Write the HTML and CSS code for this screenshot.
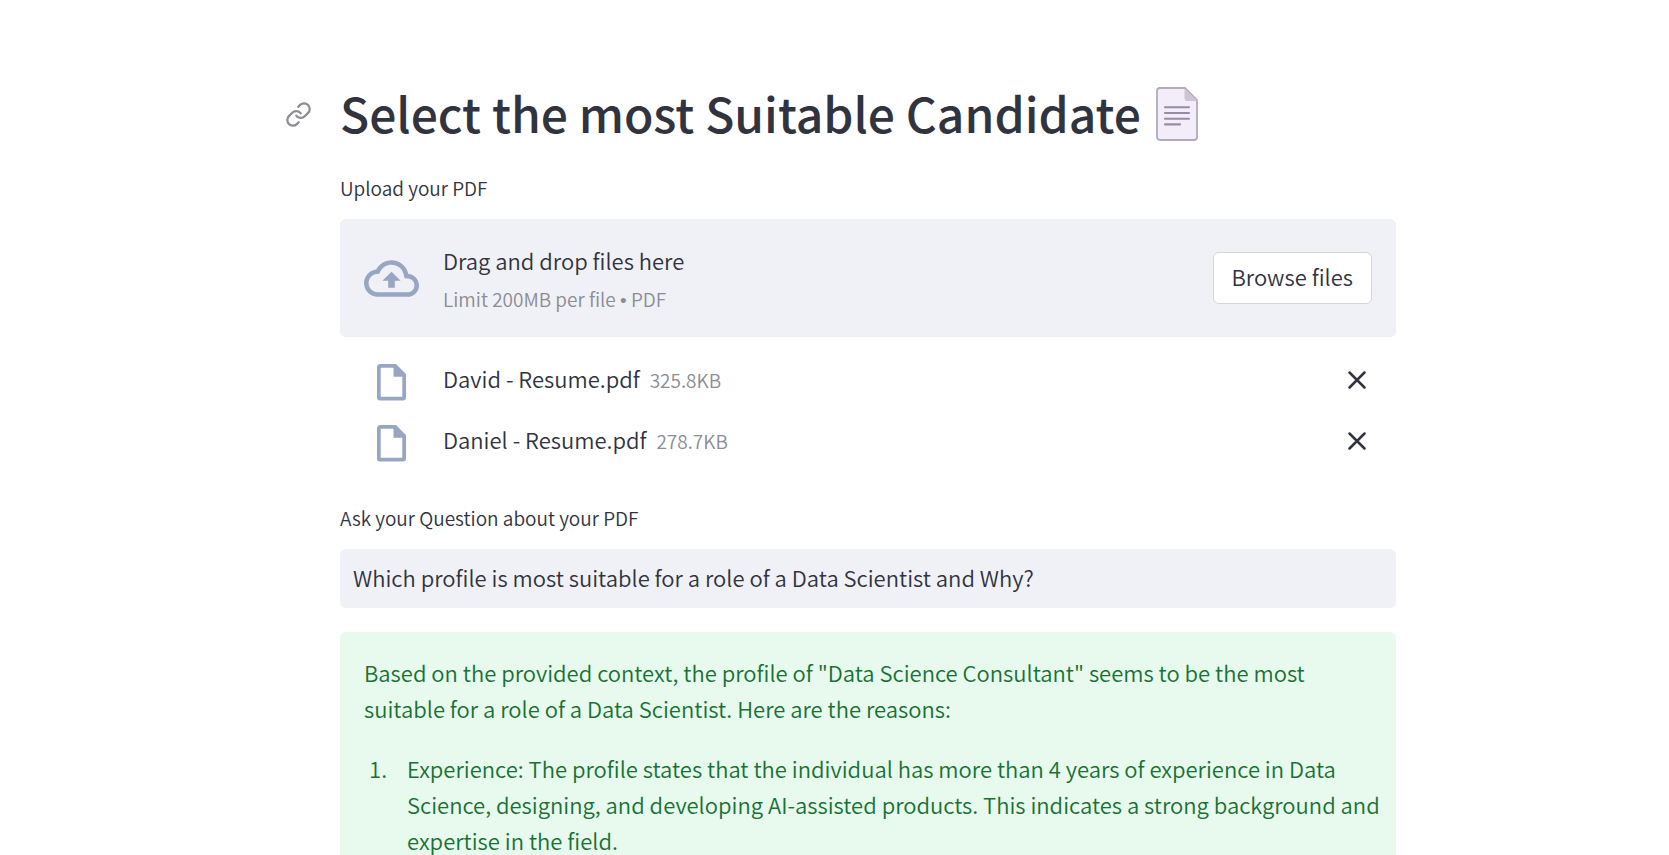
FILE: index.html
```html
<!DOCTYPE html>
<html lang="en">
<head>
<meta charset="utf-8">
<meta name="viewport" content="width=device-width, initial-scale=1">
<title>Select the most Suitable Candidate</title>
<link rel="stylesheet" href="styles.css">
</head>
<body>
<svg class="sprite" aria-hidden="true">
  <symbol id="file" viewBox="0 0 29 37">
    <path fill-rule="evenodd" d="M3.500 0H19L29 10V33.500A3 3 0 0 1 26 36.500H3A3 3 0 0 1 0 33.500V3.500A3.500 3.500 0 0 1 3.500 0ZM3.700 3.700V32.800H25.300V12.800H16.500V3.700Z"/>
  </symbol>
  <symbol id="cross" viewBox="0 0 18 18">
    <path d="M1.500 1.500L16.500 16.500M16.500 1.500L1.500 16.500"/>
  </symbol>
</svg>
<main class="page">
  <header class="heading">
    <a class="anchor" href="#title" aria-label="Link to heading">
      <svg viewBox="0 0 24 24"><path d="M10 13a5 5 0 0 0 7.540.540l3-3a5 5 0 0 0-7.070-7.070l-1.720 1.710"/><path d="M14 11a5 5 0 0 0-7.540-.540l-3 3a5 5 0 0 0 7.070 7.070l1.710-1.710"/></svg>
    </a>
    <h1 class="title" id="title">Select the most Suitable Candidate</h1>
    <svg class="page-icon" viewBox="0 0 42 54" aria-hidden="true">
      <path d="M4 1H29L41 13V50A3 3 0 0 1 38 53H4A3 3 0 0 1 1 50V4A3 3 0 0 1 4 1Z" fill="#f3edf9" stroke="#b4a9bc" stroke-width="1.800"/>
      <path d="M28.500 2V11A3 3 0 0 0 31.500 14H40.500V13L29 1.500Z" fill="#cdc4d6"/>
      <path d="M9 20.200H33M9 26H33M9 31.800H33M9 37.400H24" stroke="#998ba6" stroke-width="2.100" stroke-linecap="round"/>
    </svg>
  </header>

  <section class="field">
    <label class="label" for="browse">Upload your PDF</label>
    <div class="dropzone">
      <svg class="cloud" viewBox="0 0 24 24" aria-hidden="true"><path d="M19.350 10.040C18.670 6.590 15.640 4 12 4 9.110 4 6.600 5.640 5.350 8.040 2.340 8.360 0 10.910 0 14c0 3.310 2.690 6 6 6h13c2.760 0 5-2.240 5-5 0-2.640-2.050-4.780-4.650-4.960zM19 18H6c-2.210 0-4-1.790-4-4 0-2.050 1.530-3.760 3.560-3.970l1.070-.110.500-.950C8.080 7.140 9.940 6 12 6c2.620 0 4.880 1.860 5.390 4.430l.300 1.500 1.530.110c1.560.100 2.780 1.410 2.780 2.960 0 1.650-1.350 3-3 3zM8 13h2.550v3h2.900v-3H16l-4-4z"/></svg>
      <div class="hint">
        <span class="hint-main">Drag and drop files here</span>
        <span class="hint-sub">Limit 200MB per file <span class="dot">•</span> PDF</span>
      </div>
      <button class="browse" id="browse" type="button">Browse files</button>
    </div>
    <ul class="files">
      <li class="file">
        <svg class="file-icon" aria-hidden="true"><use href="#file"/></svg>
        <span class="file-name">David - Resume.pdf</span>
        <span class="file-size">325.8KB</span>
        <button class="remove" type="button" aria-label="Remove David - Resume.pdf"><svg><use href="#cross"/></svg></button>
      </li>
      <li class="file">
        <svg class="file-icon" aria-hidden="true"><use href="#file"/></svg>
        <span class="file-name">Daniel - Resume.pdf</span>
        <span class="file-size">278.7KB</span>
        <button class="remove" type="button" aria-label="Remove Daniel - Resume.pdf"><svg><use href="#cross"/></svg></button>
      </li>
    </ul>
  </section>

  <section class="field">
    <label class="label" for="question">Ask your Question about your PDF</label>
    <input class="question" id="question" type="text" value="Which profile is most suitable for a role of a Data Scientist and Why?">
  </section>

  <section class="answer">
    <p>Based on the provided context, the profile of "Data Science Consultant" seems to be the most suitable for a role of a Data Scientist. Here are the reasons:</p>
    <ol>
      <li>Experience: The profile states that the individual has more than 4 years of experience in Data Science, designing, and developing AI-assisted products. This indicates a strong background and expertise in the field.</li>
    </ol>
  </section>
</main>
</body>
</html>
```

FILE: styles.css
```css
* { box-sizing: border-box; }
html { overflow: hidden; }
body {
  margin: 0;
  padding: 84px 0 0 67px;
  background: #fff;
  color: #31333f;
  font: 350 22px/36px "Noto Sans CJK SC", "Noto Sans", sans-serif;
}
button, input { font: inherit; color: inherit; }
.sprite { display: none; }
.page {
  width: 100%;
  max-width: 1056px;
  margin: 0 auto;
}
.heading {
  position: relative;
  display: flex;
  align-items: center;
  gap: 15px;
  height: 60px;
}
.anchor {
  position: absolute;
  left: -55px;
  display: flex;
}
.anchor svg {
  width: 27px;
  height: 27px;
  fill: none;
  stroke: #8b8c95;
  stroke-width: 2;
  stroke-linecap: round;
  stroke-linejoin: round;
}
.title {
  margin: 0;
  padding-bottom: 4px;
  font-size: 48px;
  line-height: 56px;
  font-weight: 500;
  white-space: nowrap;
}
.page-icon {
  width: 42px;
  height: 54px;
  fill: none;
}
.field { margin-top: 27px; }
.label {
  display: block;
  margin-bottom: 14px;
  font-size: 19px;
  line-height: 34px;
}
.dropzone {
  display: flex;
  align-items: center;
  min-height: 118px;
  padding: 0 24px;
  border-radius: 6px;
  background: #f0f1f6;
}
.cloud {
  width: 55px;
  height: 55px;
  margin-right: 24px;
  fill: #97a6c3;
}
.hint {
  display: flex;
  flex: 1;
  flex-direction: column;
  gap: 3px;
  padding-top: 4px;
}
.hint-sub { font-size: 19px; color: #8b8c95; }
.dot { font-family: "Liberation Sans", sans-serif; }
.browse {
  height: 52px;
  padding: 0 18px 4px;
  border: 1px solid #d5d6db;
  border-radius: 6px;
  background: #fff;
}
.files {
  margin: 0;
  padding: 14px 24px 1px;
  list-style: none;
}
.file {
  display: flex;
  align-items: center;
  height: 61px;
  padding-bottom: 4px;
}
.file-icon {
  width: 29px;
  height: 37px;
  margin: 6px 37px 0 13px;
  fill: #97a6c3;
}
.file-name { padding-bottom: 4px; }
.file-size {
  margin-left: 10px;
  font-size: 19px;
  color: #8b8c95;
}
.remove {
  display: flex;
  margin-left: auto;
  padding: 6px;
  border: 0;
  background: none;
}
.remove svg {
  width: 18px;
  height: 18px;
  fill: none;
  stroke: #31333f;
  stroke-width: 2.500;
  stroke-linecap: round;
}
.question {
  display: block;
  width: 100%;
  height: 59px;
  padding: 0 13px 4px;
  border: 0;
  border-radius: 6px;
  background: #f0f1f6;
}
.answer {
  margin-top: 24px;
  padding: 22px 14px 22px 24px;
  border-radius: 6px;
  background: #e8f9ee;
  color: #177233;
}
.answer p { margin: 0 0 24px; }
.answer ol { margin: 0; padding-left: 28px; }
.answer li { padding-left: 15px; }
```
